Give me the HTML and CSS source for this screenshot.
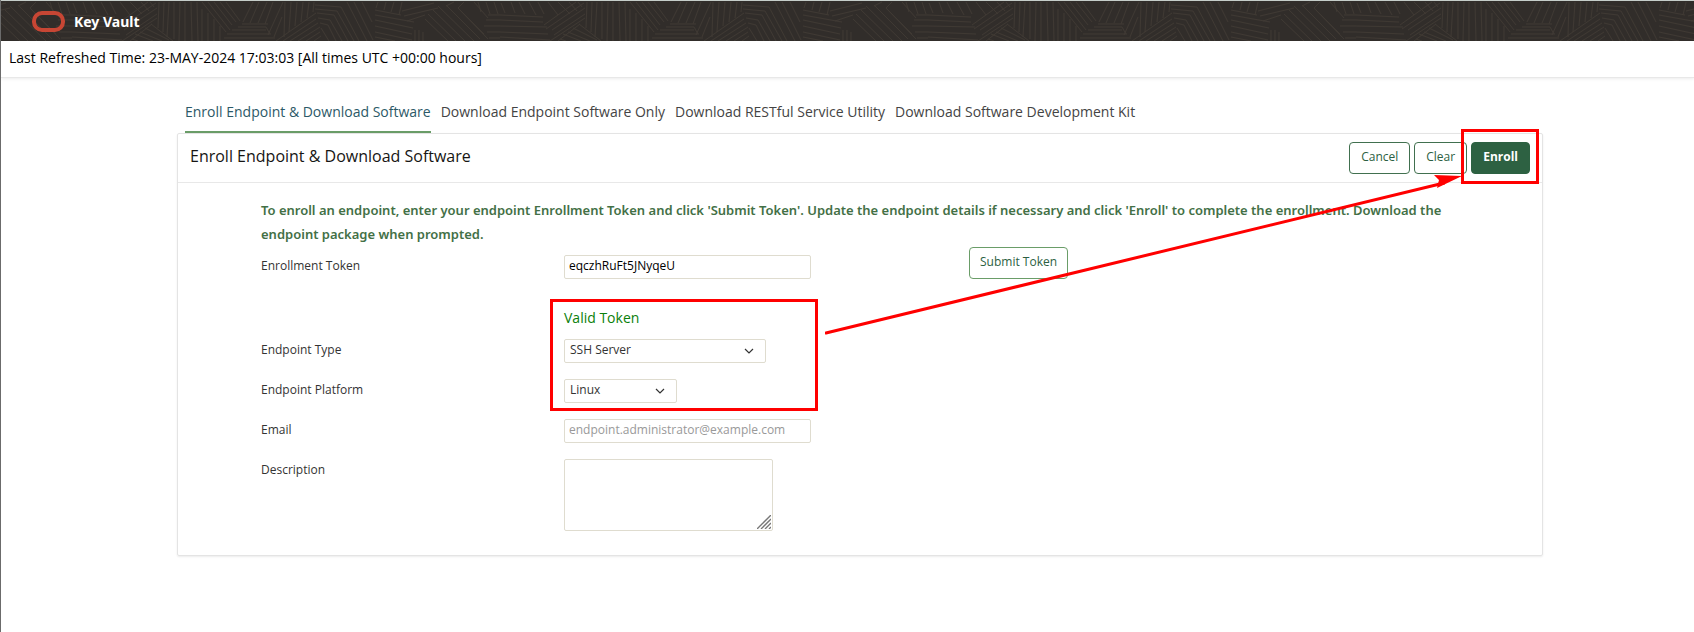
FILE: index.html
```html
<!DOCTYPE html>
<html lang="en">
<head>
<meta charset="utf-8">
<title>Key Vault</title>
<link rel="stylesheet" href="styles.css">
</head>
<body>
<header class="banner">
  <svg class="banner-pattern" aria-hidden="true">
    <defs>
      <pattern id="weave" x="71" y="0" width="428" height="40" patternUnits="userSpaceOnUse">
        <g fill="none" stroke="#3f3933" stroke-width="1">
          <path d="M1 2l4 10M11 1l4 11M19 1l6 12M29 1l7 13M38 1l6 12M48 1l10 13M58 1l12 12M69 1l8 9M78 1l4 5"/>
          <path d="M0 14l43 2M0 19l43 2M0 25l47 1M0 31l48 2M0 36l50 3"/>
          <path d="M44 24L76 1M46 28L84 2M52 29L85 7M54 34L85 13M50 40L85 17M58 40L80 23"/>
          <path d="M60 38l6 2M63 33l18 7M68 31l22 9M73 27l24 12M79 23l22 17"/>
          <path d="M87 1l-1 26M92 1l-1 30M97 1l-2 35M102 1v37M108 1l-1 39M113 1v39M119 1l1 39M125 1l1 39M130 8v32M136 12v28M142 18v22M148 25v15"/>
          <path d="M130 1l24 30M136 1l22 28M142 1l18 23M148 1l16 20M154 1l14 19"/>
          <path d="M171 21l10-20M178 22l9-21M186 22l9-21M193 23l8-22M170 23h26M166 26h28l4 7M160 29h34M155 33h44M152 37h51M196 34l15-33M202 36l8-20"/>
          <path d="M213 1l-1 35M219 1l-2 30M225 1l-2 24M231 1l-2 20M237 1l-2 16M242 1l-1 10"/>
          <path d="M204 40l40-28M211 40l33-22M218 40l28-18M226 40l22-14M234 40l14-9M242 40l7-5"/>
          <path d="M243 4l26 2 18 34M243 8l22 2 17 30M245 12l17 2 14 26M246 17l12 2 12 21M248 22l8 2 8 16M249 27l8 13M275 1l20 39M282 1l19 38M290 1l10 20"/>
          <path d="M303 14l39 7M303 19l38 8M303 25l37 8M303 31l37 8M303 36l20 4M303 9l26 5M306 1l-2 6M314 1l-2 8M322 1l-3 10M330 1l-3 13"/>
          <path d="M330 10l32-8M332 15l34-8M335 20l18-6M343 29v11M347 29v11M351 31v9"/>
          <path d="M353 18l23 22M356 13l28 27M361 9l32 31M366 5l36 35M374 4l34 34M382 1l-8 4M386 7l26 26M392 1l-6 6M386 7l30 31M402 1l14 16"/>
          <path d="M406 1l3 10M414 1l4 12M422 1l4 12M416 14h12M414 19h14M412 25h16M415 31h13M417 37h11"/>
        </g>
      </pattern>
    </defs>
    <rect width="100%" height="100%" fill="url(#weave)"/>
  </svg>
  <a class="brand" href="#">
    <svg class="brand-mark" width="34" height="22" viewBox="0 0 34 22" aria-hidden="true">
      <rect x="2" y="3" width="29" height="17" rx="8" fill="none" stroke="#c74634" stroke-width="4"/>
    </svg>
    <span>Key Vault</span>
  </a>
</header>
<div class="refresh-bar">Last Refreshed Time: 23-MAY-2024 17:03:03 [All times UTC +00:00 hours]</div>
<main class="content">
  <nav class="tabs">
    <a class="tab tab-active" href="#">Enroll Endpoint &amp; Download Software</a>
    <a class="tab" href="#">Download Endpoint Software Only</a>
    <a class="tab" href="#">Download RESTful Service Utility</a>
    <a class="tab" href="#">Download Software Development Kit</a>
  </nav>
  <form class="panel">
    <div class="panel-head">
      <h1 class="panel-title">Enroll Endpoint &amp; Download Software</h1>
      <div class="actions">
        <button class="btn" type="button">Cancel</button>
        <button class="btn" type="button">Clear</button>
        <span class="marked">
          <button class="btn btn-primary" type="button">Enroll</button>
          <span class="mark mark-enroll"></span>
        </span>
      </div>
    </div>
    <div class="panel-body">
      <p class="hint">To enroll an endpoint, enter your endpoint Enrollment Token and click 'Submit Token'. Update the endpoint details if necessary and click 'Enroll' to complete the enrollment. Download the endpoint package when prompted.</p>
      <div class="row">
        <label class="label" for="token">Enrollment Token</label>
        <input class="field field-text" id="token" type="text" value="eqczhRuFt5JNyqeU">
        <button class="btn btn-submit" type="button">Submit Token</button>
      </div>
      <div class="token-group">
        <div class="row row-status">
          <output class="status" for="token">Valid Token</output>
        </div>
        <div class="row">
          <label class="label" for="type">Endpoint Type</label>
          <span class="select select-type">
            <select class="field" id="type"><option>SSH Server</option></select>
            <svg class="chevron" width="10" height="6" viewBox="0 0 10 6" aria-hidden="true"><path d="M1 1l4 4 4-4" fill="none" stroke="#333" stroke-width="1.2"/></svg>
          </span>
        </div>
        <div class="row">
          <label class="label" for="platform">Endpoint Platform</label>
          <span class="select select-platform">
            <select class="field" id="platform"><option>Linux</option></select>
            <svg class="chevron" width="10" height="6" viewBox="0 0 10 6" aria-hidden="true"><path d="M1 1l4 4 4-4" fill="none" stroke="#333" stroke-width="1.2"/></svg>
          </span>
        </div>
        <span class="mark mark-group"></span>
      </div>
      <div class="row">
        <label class="label" for="email">Email</label>
        <input class="field field-text" id="email" type="email" placeholder="endpoint.administrator@example.com">
      </div>
      <div class="row row-area">
        <label class="label" for="description">Description</label>
        <span class="area">
          <textarea class="field field-area" id="description"></textarea>
          <svg class="grip" width="14" height="14" viewBox="0 0 14 14" aria-hidden="true"><path d="M0 14L14 0M4 14L14 4M8 14l6-6M12 14l2-2" fill="none" stroke="#777" stroke-width="1.4"/></svg>
        </span>
      </div>
    </div>
    <svg class="arrow-line" viewBox="0 0 620 156" preserveAspectRatio="none" aria-hidden="true"><path d="M1 154L619 4" fill="none" stroke="#f00" stroke-width="3" stroke-linecap="round" vector-effect="non-scaling-stroke"/></svg>
    <svg class="arrow-head" width="28" height="14" viewBox="0 0 28 14" aria-hidden="true"><path d="M28 1L0 0l5 5-2 8z" fill="#f00"/></svg>
  </form>
</main>
</body>
</html>
```

FILE: styles.css
```css
* { box-sizing: border-box; }

body {
  margin: 0;
  min-height: 100vh;
  background: #fff;
  border-left: 1px solid #6b6b6b;
  font-family: "Open Sans", "Noto Sans", sans-serif;
  font-size: 12px;
  color: #333;
}

.banner {
  position: relative;
  height: 41px;
  display: flex;
  align-items: center;
  padding-left: 31px;
  background: #312d2a;
  border-top: 1px solid #c5cdc9;
}

.banner-pattern {
  position: absolute;
  inset: 0;
  width: 100%;
  height: 100%;
}

.brand {
  position: relative;
  display: flex;
  align-items: center;
  gap: 8px;
  color: #fff;
  font-family: "Noto Sans", sans-serif;
  font-size: 14px;
  font-weight: 700;
  text-decoration: none;
}

.brand-mark { display: block; }

.refresh-bar {
  height: 37px;
  padding: 0 8px;
  line-height: 34px;
  font-size: 14px;
  color: #000;
  border-bottom: 1px solid #e8e8e8;
  box-shadow: 0 1px 3px rgba(0, 0, 0, 0.08);
}

.content { padding: 16px 151px 0 176px; }

.tabs {
  display: flex;
  gap: 10px;
  padding: 0 8px;
}

.tab {
  height: 39px;
  line-height: 36px;
  font-size: 14px;
  color: #444;
  text-decoration: none;
  white-space: nowrap;
}

.tab-active {
  color: #2c5967;
  border-bottom: 2px solid #6a9d68;
}

.panel {
  position: relative;
  border: 1px solid #e4e4e4;
  border-radius: 2px;
  box-shadow: 0 1px 2px rgba(0, 0, 0, 0.08);
}

.panel-head {
  display: flex;
  justify-content: space-between;
  align-items: flex-start;
  padding: 8px 12px;
  border-bottom: 1px solid #e8e8e8;
}

.panel-title {
  margin: 0;
  font-size: 16px;
  font-weight: 400;
  line-height: 28px;
  color: #161513;
}

.actions {
  display: flex;
  gap: 4px;
}

.btn {
  height: 32px;
  padding: 0 11px 3px;
  font: inherit;
  color: #2c5f42;
  background: #fff;
  border: 1px solid #41704f;
  border-radius: 4px;
}

.btn-primary {
  color: #fff;
  font-weight: 700;
  background: #2d6142;
  border-color: #2d6142;
}

.marked { position: relative; }

.mark {
  position: absolute;
  border: 3px solid #f00;
  pointer-events: none;
}

.mark-enroll { inset: -13px -9px -10px -10px; }

.panel-body { padding: 15px 60px 24px 83px; }

.hint {
  margin: 0 0 1px;
  font-family: "Noto Sans", sans-serif;
  font-size: 13px;
  font-weight: 600;
  line-height: 24px;
  color: #437046;
}

.row {
  display: grid;
  grid-template-columns: 303px 405px auto;
  align-items: center;
  justify-content: start;
  height: 40px;
}

.label { padding-bottom: 3px; }

.row-status {
  grid-template-columns: 303px auto;
  height: 32px;
}

.status {
  grid-column: 2;
  padding-top: 4px;
  font-size: 14px;
  color: #0a800a;
}

.field {
  height: 24px;
  font: inherit;
  color: #333;
  background: #fff;
  border: 1px solid #dfdccf;
  border-radius: 2px;
}

.field-text {
  width: 247px;
  padding: 0 4px 3px;
  color: #000;
}

.field-text::placeholder { color: #999; }

.btn-submit {
  align-self: start;
  padding: 0 10px 3px;
  border-color: #6a9d68;
}

.token-group {
  position: relative;
  padding-top: 12px;
}

.mark-group {
  top: 12px;
  left: 289px;
  width: 268px;
  height: 112px;
}

.select { position: relative; }

.select .field {
  display: block;
  width: 100%;
  padding: 0 5px 3px;
  appearance: none;
}

.select-type { width: 202px; }

.select-platform { width: 113px; }

.chevron {
  position: absolute;
  top: 9px;
  right: 12px;
}

.row-area {
  height: auto;
  align-items: start;
  padding-top: 8px;
}

.row-area .label { line-height: 22px; }

.area {
  position: relative;
  width: 209px;
}

.field-area {
  display: block;
  width: 100%;
  height: 72px;
  resize: none;
}

.grip {
  position: absolute;
  right: 2px;
  bottom: 2px;
}

.arrow-line {
  position: absolute;
  top: 45px;
  left: 647px;
  width: calc(100% - 744px);
  height: 156px;
  pointer-events: none;
}

.arrow-head {
  position: absolute;
  top: 41px;
  right: 80px;
  pointer-events: none;
}
```
